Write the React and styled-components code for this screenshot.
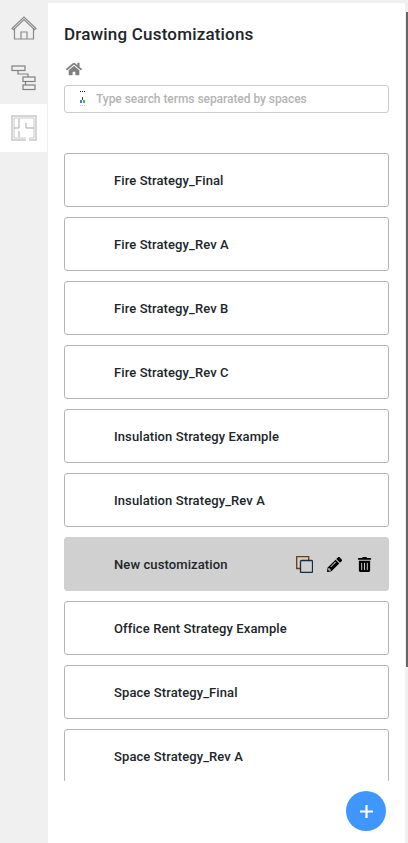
import styled, { createGlobalStyle } from "styled-components";
import { FaHome, FaPencilAlt, FaTrashAlt } from "react-icons/fa";

const GlobalStyle = createGlobalStyle`
  html, body {
    margin: 0;
    height: 100%;
    overflow: hidden;
    background: #f0f0f0;
    font-family: Roboto, "Liberation Sans", sans-serif;
  }
  * { box-sizing: border-box; }
`;

const Page = styled.div`
  position: relative;
  display: flex;
  width: 408px;
  height: 843px;
  background: #f0f0f0;
`;

const Sidebar = styled.nav`
  display: flex;
  flex-direction: column;
  gap: 2px;
  flex: 0 0 48px;
  padding-top: 4px;
`;

const Tab = styled.div`
  display: flex;
  align-items: center;
  justify-content: center;
  width: 47px;
  height: 48px;
  background: ${(p) => (p.$active ? "#fff" : "transparent")};
`;

const Main = styled.main`
  position: relative;
  display: flex;
  flex-direction: column;
  width: 357px;
  height: 840px;
  margin-top: 3px;
  background: #fff;
`;

const Title = styled.h1`
  margin: 0;
  padding: 21px 0 0 16px;
  height: 49px;
  font-size: 17px;
  line-height: 20px;
  font-weight: 500;
  letter-spacing: 0.19px;
  color: #212529;
`;

const Crumb = styled.div`
  display: flex;
  align-items: center;
  height: 14px;
  margin: 10px 0 0 18px;
  color: #808080;
  font-size: 16px;
`;

const Search = styled.div`
  display: flex;
  align-items: center;
  height: 28px;
  margin: 9px 16px 0;
  padding-left: 14px;
  border: 1px solid #ccc;
  border-radius: 3px;
`;

const Placeholder = styled.span`
  margin-left: 10px;
  font-size: 12px;
  font-weight: 500;
  letter-spacing: -0.05px;
  color: #b4b4b4;
`;

const List = styled.div`
  display: flex;
  flex-direction: column;
  gap: 10px;
  height: 628px;
  margin-top: 40px;
  padding: 0 16px;
  overflow: hidden;
`;

const Row = styled.div`
  display: flex;
  flex: 0 0 54px;
  align-items: center;
  justify-content: space-between;
  padding: 0 16px 0 49px;
  border: 1px solid ${(p) => (p.$active ? "#d0d0d0" : "#b4b4b4")};
  border-radius: 3px;
  background: ${(p) => (p.$active ? "#d0d0d0" : "#fff")};
  font-size: 13px;
  font-weight: 500;
  letter-spacing: 0.1px;
  color: #212529;
`;

const Actions = styled.div`
  display: flex;
  align-items: center;
  gap: 14px;
  color: #000;
  font-size: 15px;
`;

const EditIcon = styled(FaPencilAlt)`
  margin-right: 1px;
`;

const Fab = styled.button`
  position: absolute;
  left: 298px;
  top: 788px;
  display: flex;
  align-items: center;
  justify-content: center;
  width: 40px;
  height: 40px;
  padding: 0;
  border: 0;
  border-radius: 50%;
  background: #4096ff;
`;

const Scrollbar = styled.div`
  position: absolute;
  right: 0;
  top: 12px;
  width: 2px;
  height: 655px;
  background: #666;
`;

const HomeOutline = () => (
  <svg width="26" height="24" viewBox="0 0 26 24" fill="none" stroke="#8a8a8a" strokeWidth="1.2">
    <path d="M1 12.500 13 1l12 11.500-1.500 1.200L13 3.500 2.500 13.700z" />
    <path d="M3.500 12v11h19V12" />
    <path d="M10 23v-7h6v7" />
  </svg>
);

const TreeIcon = () => (
  <svg width="26" height="26" viewBox="0 0 26 26" fill="none" stroke="#808080" strokeWidth="1.2">
    <rect x="1" y="1" width="13" height="4.500" />
    <rect x="12" y="12" width="12" height="4.500" />
    <rect x="12" y="20" width="12" height="4.500" />
    <path d="M7 5.500V9h10v3M14.500 16.500v3.500" />
  </svg>
);

const PlanIcon = () => (
  <svg width="26" height="26" viewBox="0 0 26 26" fill="none" stroke="#c8c8c8">
    <path d="M15 25H1V1h24v24h-7" strokeWidth="1.500" />
    <path d="M15 23H3V3h20v20h-5" strokeWidth="1" />
    <path d="M8 4v9M8 16v6M3 13h5M15 8v5h8" stroke="#a8a8a8" strokeWidth="1" />
  </svg>
);

const BrokenGlyph = () => (
  <svg width="7" height="16" viewBox="0 0 7 16">
    <path d="M1 0h1v1H1zM3 0h1v1H3zM5 0h1v1H5z" fill="#222" />
    <path d="M3 6h1v3H3z" fill="#444" />
    <path d="M1 9h2v3H1z" fill="#4a7de0" />
    <path d="M4 9h2v3H4z" fill="#48b868" />
    <path d="M1 14h1v1H1zM3 14h1v1H3zM5 14h1v1H5z" fill="#d8c0f0" />
  </svg>
);

const CopyIcon = () => (
  <svg width="17" height="17" viewBox="0 0 17 17" fill="none" stroke="#000" strokeWidth="1.300">
    <path d="M4.500 12.500H.7V.7h12v3.800" stroke="#6b3d10" />
    <rect x="4.500" y="4.500" width="12" height="12" rx="1" stroke="#1a2a40" />
  </svg>
);

const PlusIcon = () => (
  <svg width="13" height="13" viewBox="0 0 13 13" stroke="#fff" strokeWidth="2.200">
    <path d="M6.500 0v13M0 6.500h13" />
  </svg>
);

const items = [
  "Fire Strategy_Final",
  "Fire Strategy_Rev A",
  "Fire Strategy_Rev B",
  "Fire Strategy_Rev C",
  "Insulation Strategy Example",
  "Insulation Strategy_Rev A",
  "New customization",
  "Office Rent Strategy Example",
  "Space Strategy_Final",
  "Space Strategy_Rev A",
];

const App = () => {
  return (
    <>
      <GlobalStyle />
      <Page>
        <Sidebar>
          <Tab><HomeOutline /></Tab>
          <Tab><TreeIcon /></Tab>
          <Tab $active><PlanIcon /></Tab>
        </Sidebar>
        <Main>
          <Title>Drawing Customizations</Title>
          <Crumb><FaHome /></Crumb>
          <Search>
            <BrokenGlyph />
            <Placeholder>Type search terms separated by spaces</Placeholder>
          </Search>
          <List>
            {items.map((name) => {
              const active = name === "New customization";
              return (
                <Row key={name} $active={active}>
                  {name}
                  {active && (
                    <Actions>
                      <CopyIcon />
                      <EditIcon />
                      <FaTrashAlt />
                    </Actions>
                  )}
                </Row>
              );
            })}
          </List>
          <Fab><PlusIcon /></Fab>
        </Main>
        <Scrollbar />
      </Page>
    </>
  );
};

export default App;
